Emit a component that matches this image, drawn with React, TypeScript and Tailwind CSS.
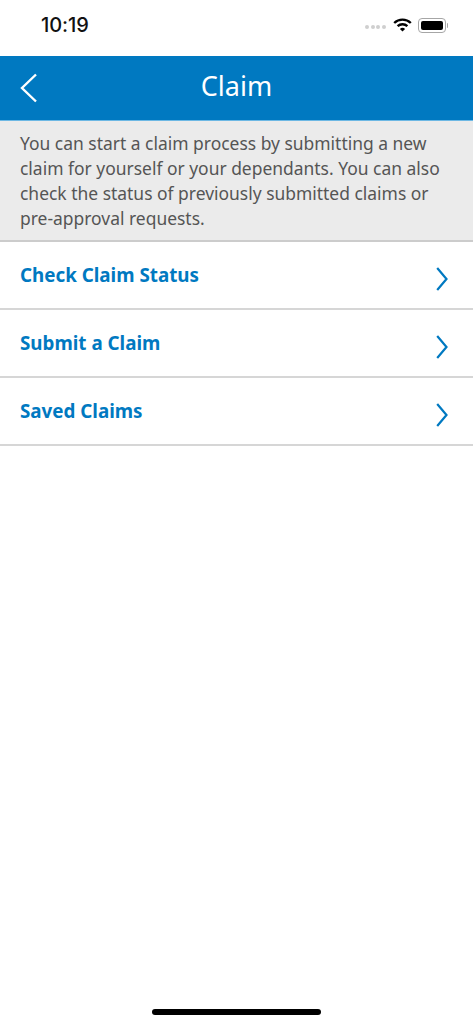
const rows = ["Check Claim Status", "Submit a Claim", "Saved Claims"];

function Wifi() {
  return (
    <svg width="19" height="14" viewBox="0 0 19 14" className="text-black">
      <path d="M1.2 5 A12 12 0 0 1 17.8 5" fill="none" stroke="currentColor" strokeWidth="2.4" />
      <path d="M4.6 8.2 A7.2 7.2 0 0 1 14.4 8.2" fill="none" stroke="currentColor" strokeWidth="2.4" />
      <path d="M9.5 13.6 L6.9 10.9 A3.8 3.8 0 0 1 12.1 10.9 Z" fill="currentColor" />
    </svg>
  );
}

function Battery() {
  return (
    <div className="flex items-center">
      <div className="w-[28px] h-[15px] rounded-[4px] border border-[#a6a6a6] p-[2px]">
        <div className="w-full h-full rounded-[2px] bg-black" />
      </div>
      <div className="w-[1.5px] h-[5px] ml-[1px] rounded-r-sm bg-[#a6a6a6]" />
    </div>
  );
}

export default function App() {
  return (
    <div className="relative w-[473px] h-[1024px] bg-white overflow-hidden font-['Noto_Sans',sans-serif]">
      {/* status bar */}
      <div className="h-[56px] flex items-center justify-between pl-[41px] pr-[25px] pb-[6px]">
        <span className="text-[20px] font-medium text-[#111] font-['Inter',sans-serif] tracking-[-0.1px]">10:19</span>
        <div className="flex items-center">
          <div className="flex gap-[1.5px] mr-[7px] mt-[4px]">
            <div className="w-[4px] h-[4px] rounded-full bg-[#cfcfcf]" />
            <div className="w-[4px] h-[4px] rounded-full bg-[#cfcfcf]" />
            <div className="w-[4px] h-[4px] rounded-full bg-[#cfcfcf]" />
            <div className="w-[4px] h-[4px] rounded-full bg-[#cfcfcf]" />
          </div>
          <div className="mr-[6px]">
            <Wifi />
          </div>
          <Battery />
        </div>
      </div>

      {/* header */}
      <div className="relative h-[65px] bg-[#0079c1] border-b border-[#6db8e4] flex items-center justify-center">
        <svg width="20" height="30" viewBox="0 0 20 30" className="absolute left-[19px] top-[17px]">
          <path d="M17 1.5 L3 15 L17 28.5" fill="none" stroke="white" strokeWidth="2.4" />
        </svg>
        <span className="text-[27px] text-white mb-[4px]">Claim</span>
      </div>

      {/* intro text */}
      <div className="h-[121px] bg-[#ebebeb] border-b-2 border-[#cccccc] pl-[20px] pr-[20px] pt-[10px] text-[17.45px] leading-[25px] text-[#555555]">
        You can start a claim process by submitting a new claim for yourself or your dependants. You can also check the status of previously submitted claims or pre-approval requests.
      </div>

      {/* menu rows */}
      {rows.map((row) => (
        <div key={row} className="h-[68px] border-b-2 border-[#d6d6d6] flex items-center justify-between pl-[20px] pr-[25px]">
          <span className="text-[18.8px] font-bold text-[#0079c1]">{row}</span>
          <svg width="12" height="24" viewBox="0 0 12 24" className="mt-[7px]">
            <path d="M1.2 1 L10.5 12 L1.2 23" fill="none" stroke="#0079c1" strokeWidth="2.2" />
          </svg>
        </div>
      ))}

      {/* home indicator */}
      <div className="absolute left-[152px] bottom-[9px] w-[169px] h-[6px] rounded-full bg-black" />
    </div>
  );
}
